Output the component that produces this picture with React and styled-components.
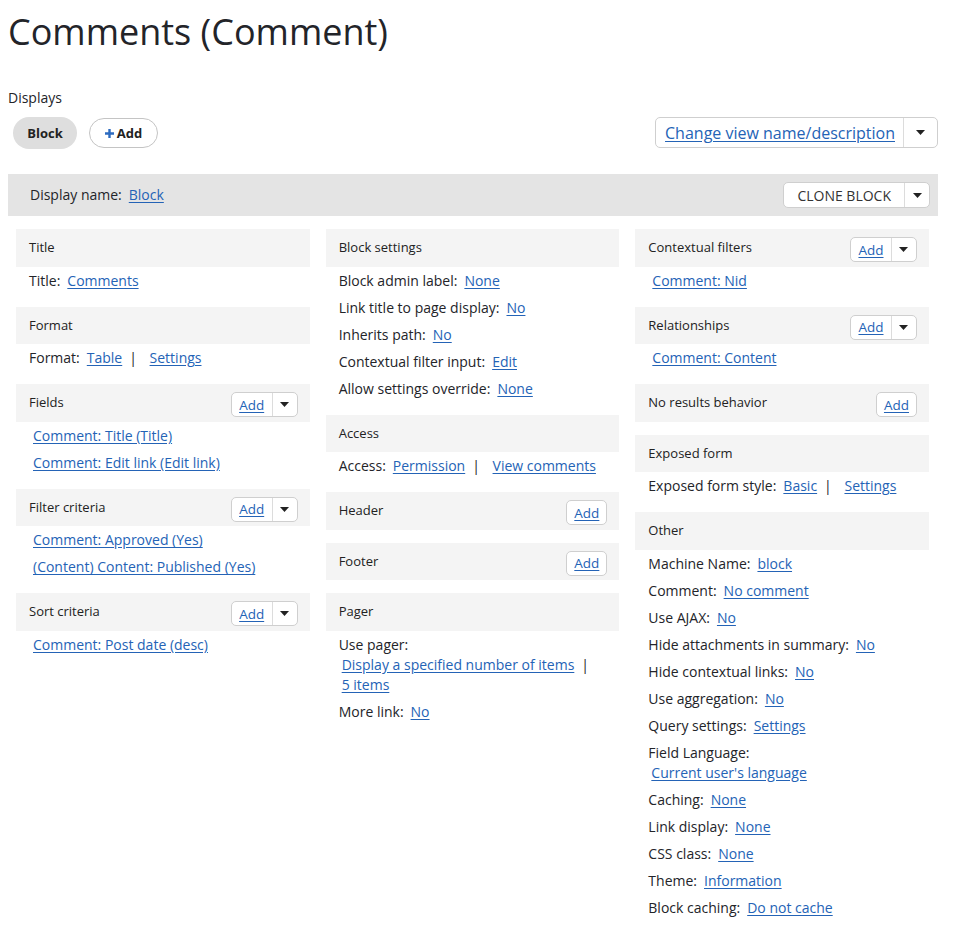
import React from 'react';
import styled, { createGlobalStyle } from 'styled-components';

const GlobalStyle = createGlobalStyle`
  html, body { margin: 0; padding: 0; background: #fff; }
  body {
    font-family: "Open Sans", "Noto Sans", sans-serif;
    color: #232429;
    font-size: 14px;
  }
`;

const LINK = '#2463b6';

const Page = styled.div`
  padding: 0 15px 20px 8px;
`;

const Title = styled.h1`
  margin: 10px 0 0;
  font-size: 36px;
  font-weight: 400;
  line-height: 43px;
`;

const DisplaysLabel = styled.div`
  margin-top: 35px;
  line-height: 20px;
  font-size: 14px;
`;

const TopRow = styled.div`
  margin-top: 9px;
  display: flex;
  justify-content: space-between;
  align-items: flex-start;
`;

const Tabs = styled.div`
  display: flex;
  gap: 12px;
  padding-left: 5px;
  align-items: center;
  height: 32px;
`;

const Tab = styled.div`
  box-sizing: border-box;
  height: ${p => (p.$active ? '32px' : '30px')};
  width: ${p => (p.$active ? '64px' : '69px')};
  border-radius: 16px;
  background: ${p => (p.$active ? '#dedede' : '#fff')};
  border: ${p => (p.$active ? 'none' : '1px solid #c4c4c4')};
  font-weight: 700;
  font-size: 13px;
  color: #222;
  display: flex;
  align-items: center;
  justify-content: center;
  gap: 3px;
`;

const Split = styled.div`
  box-sizing: border-box;
  display: flex;
  height: ${p => p.$h}px;
  border: 1px solid #cfcfcf;
  border-radius: 5px;
  background: #fff;
  overflow: hidden;
`;

const SplitMain = styled.div`
  display: flex;
  align-items: center;
  justify-content: center;
  width: ${p => (p.$w ? `${p.$w}px` : 'auto')};
  padding: ${p => p.$pad || '0'};
  font-size: ${p => p.$fs || 14}px;
  color: #333;
`;

const SplitToggle = styled.div`
  display: flex;
  align-items: center;
  justify-content: center;
  width: ${p => p.$w}px;
  border-left: 1px solid #dcdcdc;
`;

const Link = styled.a`
  color: ${LINK};
  text-decoration: underline;
  text-underline-offset: 2px;
  cursor: pointer;
  white-space: nowrap;
  font-size: ${p => p.$fs || 14}px;
`;

const Bar = styled.div`
  margin-top: 25px;
  height: 42px;
  background: #e4e4e4;
  display: flex;
  align-items: center;
  justify-content: space-between;
  padding: 0 8px 0 22px;
  box-sizing: border-box;
`;

const BarText = styled.div`
  font-size: 14px;
  line-height: 20px;
`;

const Grid = styled.div`
  margin: 13px 9px 0 8px;
  display: grid;
  grid-template-columns: repeat(3, 1fr);
  column-gap: 16px;
  align-items: start;
`;

const Column = styled.div`
  display: flex;
  flex-direction: column;
`;

const Section = styled.section`
  margin-bottom: 13px;
`;

const SectionHeader = styled.div`
  height: 37.5px;
  background: #f4f4f4;
  display: flex;
  justify-content: space-between;
  align-items: flex-start;
  padding: 0 12px 0 13px;
`;

const HeaderTitle = styled.div`
  line-height: 37px;
  font-size: 13px;
  color: #222;
`;

const HeaderAction = styled.div`
  margin-top: 8px;
`;

const Row = styled.div`
  padding: 4px 13px 3px ${p => (p.$indent ? 17 : 13)}px;
  line-height: 20px;
  font-size: 14px;
`;

const Label = styled.span`
  margin-right: 7px;
`;

const Sep = styled.span`
  margin: 0 9px 0 7px;
`;

const WrapValues = styled.div`
  padding-left: 3px;
`;

const Arrow = () => (
  <svg width="9" height="5" viewBox="0 0 9 5">
    <path d="M0 0h9L4.5 5z" fill="#222" />
  </svg>
);

const Plus = () => (
  <svg width="9" height="9" viewBox="0 0 9 9">
    <path d="M3.3 0h2.4v3.3H9v2.4H5.7V9H3.3V5.7H0V3.3h3.3z" fill="#2d6bc0" />
  </svg>
);

const AddButton = ({ split }) => (
  <Split $h={25}>
    <SplitMain $w={split ? 40 : 39}>
      <Link $fs={13.5}>Add</Link>
    </SplitMain>
    {split && (
      <SplitToggle $w={24}>
        <Arrow />
      </SplitToggle>
    )}
  </Split>
);

const Values = ({ values }) =>
  values.map((v, i) => (
    <React.Fragment key={i}>
      {i > 0 && (
        <>
          <Sep>|</Sep>{' '}
        </>
      )}
      <Link>{v}</Link>
    </React.Fragment>
  ));

const RowView = ({ row }) => {
  if (row.type === 'link') {
    return (
      <Row $indent>
        <Link>{row.value}</Link>
      </Row>
    );
  }
  if (row.type === 'wrap') {
    return (
      <Row>
        <div>{row.label}</div>
        <WrapValues>
          <Values values={row.values} />
        </WrapValues>
      </Row>
    );
  }
  return (
    <Row>
      <Label>{row.label}</Label>
      <Values values={row.values} />
    </Row>
  );
};

const SectionView = ({ s }) => (
  <Section>
    <SectionHeader>
      <HeaderTitle>{s.title}</HeaderTitle>
      {s.add && (
        <HeaderAction>
          <AddButton split={s.add === 'split'} />
        </HeaderAction>
      )}
    </SectionHeader>
    {(s.rows || []).map((r, i) => (
      <RowView key={i} row={r} />
    ))}
  </Section>
);

const kv = (label, ...values) => ({ type: 'kv', label, values });
const lk = value => ({ type: 'link', value });
const wr = (label, ...values) => ({ type: 'wrap', label, values });

const columns = [
  [
    { title: 'Title', rows: [kv('Title:', 'Comments')] },
    { title: 'Format', rows: [kv('Format:', 'Table', 'Settings')] },
    {
      title: 'Fields',
      add: 'split',
      rows: [lk('Comment: Title (Title)'), lk('Comment: Edit link (Edit link)')],
    },
    {
      title: 'Filter criteria',
      add: 'split',
      rows: [lk('Comment: Approved (Yes)'), lk('(Content) Content: Published (Yes)')],
    },
    { title: 'Sort criteria', add: 'split', rows: [lk('Comment: Post date (desc)')] },
  ],
  [
    {
      title: 'Block settings',
      rows: [
        kv('Block admin label:', 'None'),
        kv('Link title to page display:', 'No'),
        kv('Inherits path:', 'No'),
        kv('Contextual filter input:', 'Edit'),
        kv('Allow settings override:', 'None'),
      ],
    },
    { title: 'Access', rows: [kv('Access:', 'Permission', 'View comments')] },
    { title: 'Header', add: 'single' },
    { title: 'Footer', add: 'single' },
    {
      title: 'Pager',
      rows: [
        wr('Use pager:', 'Display a specified number of items', '5 items'),
        kv('More link:', 'No'),
      ],
    },
  ],
  [
    { title: 'Contextual filters', add: 'split', rows: [lk('Comment: Nid')] },
    { title: 'Relationships', add: 'split', rows: [lk('Comment: Content')] },
    { title: 'No results behavior', add: 'single' },
    { title: 'Exposed form', rows: [kv('Exposed form style:', 'Basic', 'Settings')] },
    {
      title: 'Other',
      rows: [
        kv('Machine Name:', 'block'),
        kv('Comment:', 'No comment'),
        kv('Use AJAX:', 'No'),
        kv('Hide attachments in summary:', 'No'),
        kv('Hide contextual links:', 'No'),
        kv('Use aggregation:', 'No'),
        kv('Query settings:', 'Settings'),
        wr('Field Language:', "Current user's language"),
        kv('Caching:', 'None'),
        kv('Link display:', 'None'),
        kv('CSS class:', 'None'),
        kv('Theme:', 'Information'),
        kv('Block caching:', 'Do not cache'),
      ],
    },
  ],
];

export default function App() {
  return (
    <>
      <GlobalStyle />
      <Page>
        <Title>Comments (Comment)</Title>
        <DisplaysLabel>Displays</DisplaysLabel>
        <TopRow>
          <Tabs>
            <Tab $active>Block</Tab>
            <Tab>
              <Plus />
              Add
            </Tab>
          </Tabs>
          <Split $h={31}>
            <SplitMain $pad="0 8px 0 9px">
              <Link $fs={16}>Change view name/description</Link>
            </SplitMain>
            <SplitToggle $w={33}>
              <Arrow />
            </SplitToggle>
          </Split>
        </TopRow>
        <Bar>
          <BarText>
            <Label>Display name:</Label>
            <Link>Block</Link>
          </BarText>
          <Split $h={26}>
            <SplitMain $pad="0 13px 0 13px" $fs={14}>
              CLONE BLOCK
            </SplitMain>
            <SplitToggle $w={24}>
              <Arrow />
            </SplitToggle>
          </Split>
        </Bar>
        <Grid>
          {columns.map((col, ci) => (
            <Column key={ci}>
              {col.map((s, si) => (
                <SectionView key={si} s={s} />
              ))}
            </Column>
          ))}
        </Grid>
      </Page>
    </>
  );
}
